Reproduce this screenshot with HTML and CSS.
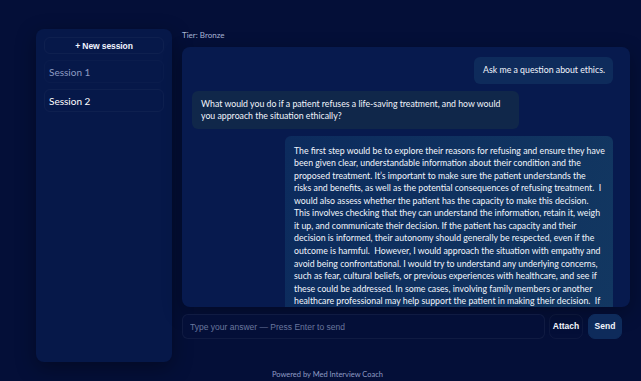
FILE: index.html
```html
<!DOCTYPE html>
<html>
<head>
<meta charset="utf-8">
<link rel="stylesheet" href="styles.css">
</head>
<body>
<div class="app">
  <aside class="sidebar">
    <button class="new-btn">+ New session</button>
    <div class="session muted">Session 1</div>
    <div class="session active">Session 2</div>
  </aside>
  <main class="main">
    <div class="tier">Tier: Bronze</div>
    <div class="chat">
      <div class="msg user">Ask me a question about ethics.</div>
      <div class="msg bot">What would you do if a patient refuses a life-saving treatment, and how would you approach the situation ethically?</div>
      <div class="msg user long">The first step would be to explore their reasons for refusing and ensure they have been given clear, understandable information about their condition and the proposed treatment. It’s important to make sure the patient understands the risks and benefits, as well as the potential consequences of refusing treatment.&nbsp; I would also assess whether the patient has the capacity to make this decision. This involves checking that they can understand the information, retain it, weigh it up, and communicate their decision. If the patient has capacity and their decision is informed, their autonomy should generally be respected, even if the outcome is harmful.&nbsp; However, I would approach the situation with empathy and avoid being confrontational. I would try to understand any underlying concerns, such as fear, cultural beliefs, or previous experiences with healthcare, and see if these could be addressed. In some cases, involving family members or another healthcare professional may help support the patient in making their decision.&nbsp; If they still refuse, I would respect their decision and document it clearly.</div>
    </div>
    <div class="composer">
      <input class="input" type="text" placeholder="Type your answer — Press Enter to send">
      <button class="btn attach">Attach</button>
      <button class="btn send">Send</button>
    </div>
  </main>
</div>
<footer class="footer">Powered by Med Interview Coach</footer>
</body>
</html>
```
FILE: styles.css
```css
* { box-sizing: border-box; }
html, body { margin: 0; padding: 0; }
body {
  background: #040f38;
  width: 641px;
  height: 381px;
  overflow: hidden;
  font-family: "Lato", "Open Sans", sans-serif;
  color: #e8eefc;
}
.app {
  display: flex;
  gap: 10px;
  padding: 29px 0 0 36px;
  height: 362px;
}
.sidebar {
  width: 136px;
  height: 333px;
  background: #061849;
  border-radius: 8px;
  padding: 8px 8px;
  display: flex;
  flex-direction: column;
  gap: 6px;
  box-shadow: 0 6px 20px rgba(0, 0, 0, 0.35);
}
.new-btn {
  height: 17px;
  background: transparent;
  border: 1px solid rgba(255, 255, 255, 0.035);
  border-radius: 6px;
  color: #f0f4ff;
  font-family: "Liberation Sans", Arial, sans-serif;
  font-size: 8.5px;
  font-weight: bold;
  padding: 0;
  letter-spacing: -0.1px;
}
.session {
  height: 23px;
  border-radius: 6px;
  border: 1px solid rgba(255, 255, 255, 0.035);
  padding: 0 0 0 4px;
  display: flex;
  align-items: center;
  font-size: 10px;
}
.session.muted { color: #8d9bc2; border-color: rgba(255,255,255,0.02); }
.session.active { color: #ffffff; }
.main {
  width: 448px;
  display: flex;
  flex-direction: column;
}
.tier {
  font-size: 8px;
  color: #aab6d6;
  height: 18px;
  padding-top: 1px;
}
.chat {
  height: 260px;
  background: #071a4e;
  border-radius: 8px;
  padding: 10px 17px 0 10px;
  display: flex;
  flex-direction: column;
  gap: 7px;
  overflow: hidden;
  box-shadow: 0 6px 20px rgba(0, 0, 0, 0.3);
}
.msg {
  font-size: 8.752px;
  line-height: 12.55px;
  border-radius: 6px;
  padding: 7px 9px;
  color: #f2f5fc;
}
.msg.user {
  align-self: flex-end;
  background: #0e2b5b;
}
.msg.user:first-child { padding: 7.25px 8px 7.25px 9px; }
.msg.bot {
  align-self: flex-start;
  background: #10274a;
  width: 327px;
  padding: 6.5px 8px 6.5px 9px;
}
.msg.long {
  width: 328px;
  background: linear-gradient(100deg, #0c2b5d 0%, #123761 100%);
  padding: 8.5px 8px 8px 9px;
  flex-shrink: 0;
}
.composer {
  display: flex;
  align-items: center;
  gap: 4px;
  margin-top: 7px;
  height: 25px;
}
.input {
  width: 363px;
  height: 25px;
  background: #040f38;
  border: 1px solid rgba(255, 255, 255, 0.05);
  border-radius: 6px;
  padding: 0 7px;
  font-family: "Liberation Sans", Arial, sans-serif;
  font-size: 8.5px;
  color: #dfe6f7;
  outline: none;
}
.input::placeholder { color: #6a779e; }
.btn {
  height: 25px;
  border-radius: 7px;
  border: 1px solid rgba(255, 255, 255, 0.04);
  background: transparent;
  color: #f2f5fc;
  font-family: "Liberation Sans", Arial, sans-serif;
  font-size: 8.5px;
  font-weight: bold;
  line-height: 1;
  padding: 0;
  flex-shrink: 0;
}
.attach { width: 34px; }
.send { width: 34px; margin-left: 1px; background: #0e2b5b; border-color: #0e2b5b; }
.footer {
  text-align: center;
  padding-left: 14px;
  font-size: 7.5px;
  color: #8f9cc4;
  margin-top: 8px;
}
```
